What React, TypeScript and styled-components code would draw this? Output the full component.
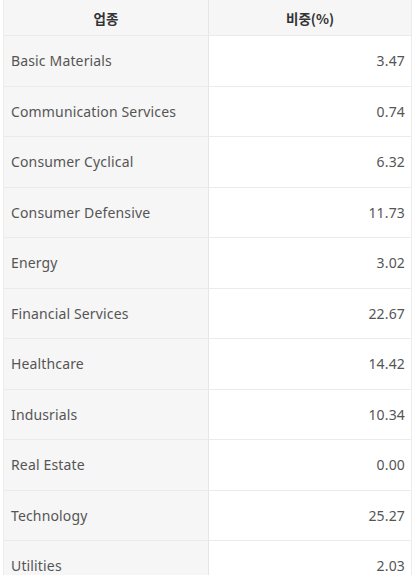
import React from "react";
import styled, { createGlobalStyle } from "styled-components";

const Global = createGlobalStyle`
  html, body { margin: 0; padding: 0; background: #ffffff; }
  body { font-family: "Noto Sans", "Noto Sans CJK KR", sans-serif; }
`;

const Page = styled.div`
  width: 416px;
  height: 575px;
  overflow: hidden;
  padding: 0 4px 0 3px;
  box-sizing: border-box;
`;

const Table = styled.div`
  display: grid;
  grid-template-columns: 205px 1fr;
  border-left: 1px solid #ececec;
  border-right: 1px solid #ececec;
`;

const HeadCell = styled.div<{ $last?: boolean }>`
  height: 36px;
  box-sizing: border-box;
  display: flex;
  align-items: center;
  justify-content: center;
  background: #f6f6f6;
  color: #333333;
  font-family: "Noto Sans CJK KR", "Noto Sans", sans-serif;
  font-size: 13.5px;
  font-weight: 700;
  border-bottom: 1px solid #ebebeb;
  border-right: ${(p) => (p.$last ? "none" : "1px solid #e6e6e6")};
`;

const Cell = styled.div<{ $value?: boolean }>`
  height: 50.5px;
  box-sizing: border-box;
  display: flex;
  align-items: center;
  justify-content: ${(p) => (p.$value ? "flex-end" : "flex-start")};
  padding: ${(p) => (p.$value ? "0 6px 0 0" : "0 0 0 7px")};
  background: ${(p) => (p.$value ? "#ffffff" : "#f6f6f6")};
  color: #555555;
  font-size: 14px;
  letter-spacing: 0.15px;
  border-bottom: 1px solid #ebebeb;
  border-right: ${(p) => (p.$value ? "none" : "1px solid #e6e6e6")};
`;

const rows: [string, string][] = [
  ["Basic Materials", "3.47"],
  ["Communication Services", "0.74"],
  ["Consumer Cyclical", "6.32"],
  ["Consumer Defensive", "11.73"],
  ["Energy", "3.02"],
  ["Financial Services", "22.67"],
  ["Healthcare", "14.42"],
  ["Indusrials", "10.34"],
  ["Real Estate", "0.00"],
  ["Technology", "25.27"],
  ["Utilities", "2.03"],
];

export default function App() {
  return (
    <>
      <Global />
      <Page>
        <Table>
          <HeadCell>업종</HeadCell>
          <HeadCell $last>비중(%)</HeadCell>
          {rows.map(([name, val]) => (
            <React.Fragment key={name}>
              <Cell>{name}</Cell>
              <Cell $value>{val}</Cell>
            </React.Fragment>
          ))}
        </Table>
      </Page>
    </>
  );
}
